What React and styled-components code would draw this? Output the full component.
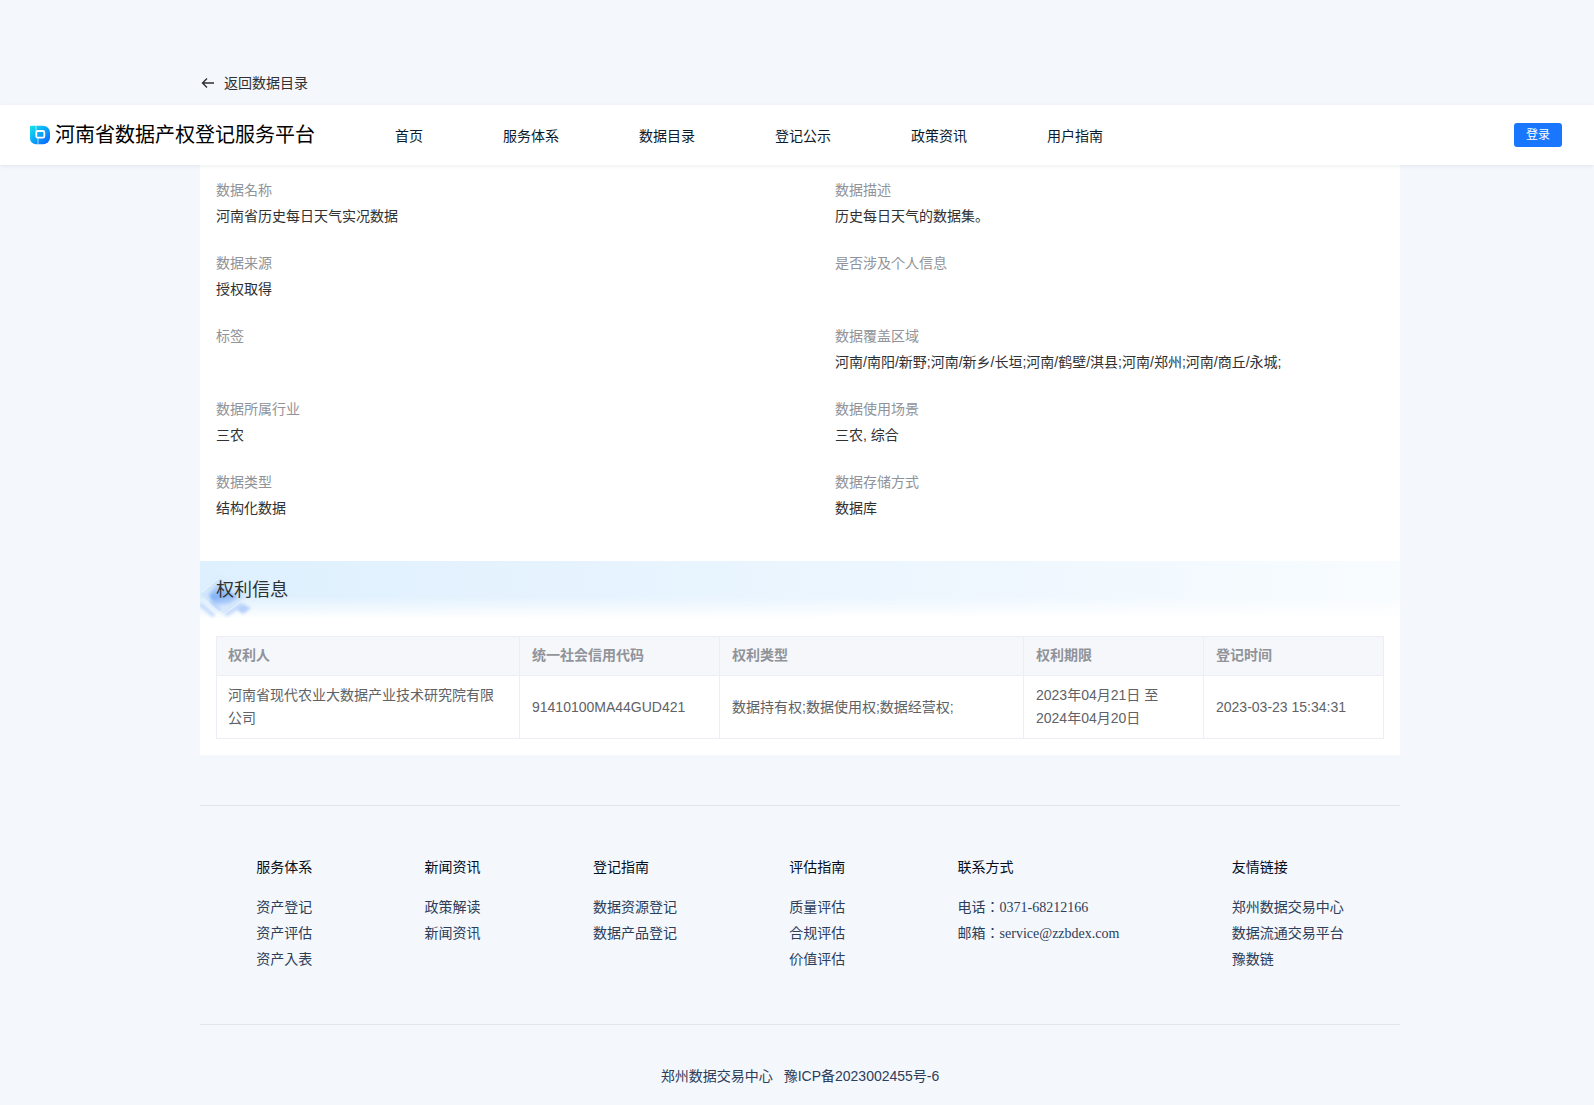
import styled, { createGlobalStyle } from 'styled-components'

const GlobalStyle = createGlobalStyle`
  * {
    box-sizing: border-box;
  }
  body {
    margin: 0;
    background: #f4f7fc;
    color: #303133;
    font-family: 'Liberation Sans', 'Noto Sans CJK JP', sans-serif;
    font-size: 14px;
  }
  a {
    color: inherit;
    text-decoration: none;
  }
`

const Container = styled.div`
  max-width: 1206px;
  padding-left: 6px;
  margin: 0 auto;
`

const BackBar = styled.nav`
  padding: 69px 0 10px;
`

const BackLink = styled.a`
  display: inline-flex;
  align-items: center;
  gap: 8px;
  height: 26px;
`

const Header = styled.header`
  position: relative;
  display: flex;
  align-items: center;
  gap: 80px;
  height: 60px;
  padding: 0 32px 0 30px;
  background: #fff;
  box-shadow: 0 1px 4px rgba(0, 21, 41, 0.08);
`

const Brand = styled.a`
  display: flex;
  align-items: center;
  gap: 5px;
  color: #000;
  font-size: 20px;
  line-height: 30px;
`

const Nav = styled.nav`
  display: flex;
  flex: 1;
  gap: 80px;
  color: #0b1a2c;
`

const LoginButton = styled.button`
  width: 48px;
  height: 24px;
  padding: 0 0 3px;
  border: 0;
  border-radius: 3px;
  background: #1977ff;
  color: #fff;
  font-family: inherit;
  font-size: 12px;
  cursor: pointer;
`

const Panel = styled.main`
  background: #fff;
`

const InfoList = styled.dl`
  display: grid;
  grid-template-columns: 1fr 1fr;
  column-gap: 70px;
  row-gap: 21px;
  margin: 0;
  padding: 12px 16px 40px;
`

const InfoItem = styled.div`
  height: 52px;
  line-height: 26px;
`

const Label = styled.dt`
  color: #909399;
`

const Value = styled.dd`
  margin: 0;
`

const Banner = styled.div`
  position: relative;
  height: 60px;
  background: linear-gradient(180deg, rgba(255, 255, 255, 0) 60%, #fff 96%),
    linear-gradient(90deg, #def0fe, #e8f4fe 40%, #f8fcff);
`

const BannerArt = styled.svg`
  position: absolute;
  left: 0;
  top: 12px;
`

const BannerTitle = styled.h2`
  position: relative;
  margin: 0;
  padding: 0 16px;
  font-size: 18px;
  font-weight: 400;
  line-height: 58px;
`

const TableWrap = styled.div`
  padding: 15px 16px 16px;
`

const Table = styled.table`
  width: 100%;
  table-layout: fixed;
  border-spacing: 0;
  color: #606266;
  line-height: 23px;
  text-align: left;

  th,
  td {
    border-right: 1px solid #ebeef5;
    border-bottom: 1px solid #ebeef5;
  }
  th:first-child,
  td:first-child {
    padding-left: 11px;
    border-left: 1px solid #ebeef5;
  }
`

const Col = styled.col`
  width: ${({ $width }) => $width || 'auto'};
`

const Th = styled.th`
  padding: 7px 12px 8px;
  border-top: 1px solid #ebeef5;
  background: #f5f7fa;
  color: #909399;
  font-weight: 700;
`

const Td = styled.td`
  padding: 8px 12px;
`

const Footer = styled.footer`
  margin-top: 50px;
  border-top: 1px solid #e2e6ec;
  color: #2c3e5a;
`

const FooterColumns = styled.div`
  display: flex;
  justify-content: space-around;
  padding: 48px 0 51px;
  border-bottom: 1px solid #e2e6ec;
`

const FooterTitle = styled.h3`
  margin: 0 0 15px;
  color: #050f1c;
  font-size: 14px;
  font-weight: 400;
  line-height: 26px;
`

const FooterList = styled.ul`
  margin: 0;
  padding: 0;
  list-style: none;
  font-family: 'Liberation Serif', 'Noto Sans CJK JP', serif;
  line-height: 26px;
`

const Copyright = styled.p`
  display: flex;
  justify-content: center;
  gap: 11px;
  margin: 0;
  padding: 38px 0 16px;
  line-height: 26px;
`

const navItems = ['首页', '服务体系', '数据目录', '登记公示', '政策资讯', '用户指南']

const infoItems = [
  { label: '数据名称', value: '河南省历史每日天气实况数据' },
  { label: '数据描述', value: '历史每日天气的数据集。' },
  { label: '数据来源', value: '授权取得' },
  { label: '是否涉及个人信息', value: '' },
  { label: '标签', value: '' },
  { label: '数据覆盖区域', value: '河南/南阳/新野;河南/新乡/长垣;河南/鹤壁/淇县;河南/郑州;河南/商丘/永城;' },
  { label: '数据所属行业', value: '三农' },
  { label: '数据使用场景', value: '三农, 综合' },
  { label: '数据类型', value: '结构化数据' },
  { label: '数据存储方式', value: '数据库' },
]

const columns = [
  { title: '权利人' },
  { title: '统一社会信用代码', width: '200px' },
  { title: '权利类型' },
  { title: '权利期限', width: '180px' },
  { title: '登记时间', width: '180px' },
]

const rows = [
  [
    '河南省现代农业大数据产业技术研究院有限公司',
    '91410100MA44GUD421',
    '数据持有权;数据使用权;数据经营权;',
    '2023年04月21日 至 2024年04月20日',
    '2023-03-23 15:34:31',
  ],
]

const footerColumns = [
  { title: '服务体系', items: ['资产登记', '资产评估', '资产入表'] },
  { title: '新闻资讯', items: ['政策解读', '新闻资讯'] },
  { title: '登记指南', items: ['数据资源登记', '数据产品登记'] },
  { title: '评估指南', items: ['质量评估', '合规评估', '价值评估'] },
  { title: '联系方式', items: ['电话：0371-68212166', '邮箱：service@zzbdex.com'] },
  { title: '友情链接', items: ['郑州数据交易中心', '数据流通交易平台', '豫数链'] },
]

function Logo() {
  return (
    <svg width="20" height="20" viewBox="0 0 20 20" aria-hidden="true">
      <defs>
        <linearGradient id="logo" x1="0" y1="0" x2="1" y2="1">
          <stop offset="0" stopColor="#16e6e6" />
          <stop offset="0.5" stopColor="#0aa4fa" />
          <stop offset="1" stopColor="#0a5cff" />
        </linearGradient>
      </defs>
      <path d="M0 1.5Q0 .7 .8 .7H13a7 7 0 0 1 7 7v4.6a7 7 0 0 1-7 7H6a6 6 0 0 1-6-6z" fill="url(#logo)" />
      <path d="M6 .7V6M8 13v6.4" stroke="#fff" strokeWidth="0.8" opacity="0.8" />
      <rect x="6.3" y="6" width="8" height="6.6" rx="1.4" fill="none" stroke="#fff" strokeWidth="1.8" />
    </svg>
  )
}

function BackIcon() {
  return (
    <svg width="16" height="16" viewBox="0 0 16 16" fill="none" stroke="currentColor" strokeWidth="1.4" aria-hidden="true">
      <path d="M14 9H3M7 4.5 2.5 9 7 13.5" />
    </svg>
  )
}

function App() {
  return (
    <>
      <GlobalStyle />
      <Container>
        <BackBar>
          <BackLink href="#">
            <BackIcon />
            返回数据目录
          </BackLink>
        </BackBar>
      </Container>
      <Header>
        <Brand href="#">
          <Logo />
          河南省数据产权登记服务平台
        </Brand>
        <Nav>
          {navItems.map((item) => (
            <a href="#" key={item}>{item}</a>
          ))}
        </Nav>
        <LoginButton type="button">登录</LoginButton>
      </Header>
      <Container>
        <Panel>
          <InfoList>
            {infoItems.map(({ label, value }) => (
              <InfoItem key={label}>
                <Label>{label}</Label>
                <Value>{value}</Value>
              </InfoItem>
            ))}
          </InfoList>
          <Banner>
            <BannerArt width="56" height="48" viewBox="0 0 56 48" aria-hidden="true">
              <defs>
                <filter id="soft" x="-20%" y="-20%" width="140%" height="140%">
                  <feGaussianBlur stdDeviation="1.5" />
                </filter>
                <linearGradient id="tile" x1="0" y1="0" x2="0.3" y2="1">
                  <stop offset="0" stopColor="#bcd8fb" stopOpacity="0.5" />
                  <stop offset="0.6" stopColor="#7fb0f7" />
                  <stop offset="1" stopColor="#b4d0fa" />
                </linearGradient>
              </defs>
              <path d="M0 22 20 3l28 20-24 20z" fill="#c0daf9" opacity="0.5" filter="url(#soft)" />
              <path d="m9 22 8-11 21 13-9 7-15 1z" fill="url(#tile)" filter="url(#soft)" />
              <g fill="none" stroke="#b4cefa" strokeWidth="4" opacity="0.7" filter="url(#soft)">
                <path d="M0 31 14 43M10 28l10 9M26 42l16-11" />
              </g>
              <path d="m36 36 7-5 8 4-8 6z" fill="#b6cffb" filter="url(#soft)" />
              <path d="M2 19 20 4l12 8M3 25l20 17 20-15" fill="none" stroke="#fff" strokeWidth="0.8" opacity="0.7" />
            </BannerArt>
            <BannerTitle>权利信息</BannerTitle>
          </Banner>
          <TableWrap>
            <Table>
              <colgroup>
                {columns.map(({ title, width }) => (
                  <Col key={title} $width={width} />
                ))}
              </colgroup>
              <thead>
                <tr>
                  {columns.map(({ title }) => (
                    <Th key={title} scope="col">{title}</Th>
                  ))}
                </tr>
              </thead>
              <tbody>
                {rows.map((row) => (
                  <tr key={row[1]}>
                    {row.map((cell) => (
                      <Td key={cell}>{cell}</Td>
                    ))}
                  </tr>
                ))}
              </tbody>
            </Table>
          </TableWrap>
        </Panel>
        <Footer>
          <FooterColumns>
            {footerColumns.map(({ title, items }) => (
              <section key={title}>
                <FooterTitle>{title}</FooterTitle>
                <FooterList>
                  {items.map((item) => (
                    <li key={item}><a href="#">{item}</a></li>
                  ))}
                </FooterList>
              </section>
            ))}
          </FooterColumns>
          <Copyright>
            <span>郑州数据交易中心</span>
            <a href="#">豫ICP备2023002455号-6</a>
          </Copyright>
        </Footer>
      </Container>
    </>
  )
}

export default App
